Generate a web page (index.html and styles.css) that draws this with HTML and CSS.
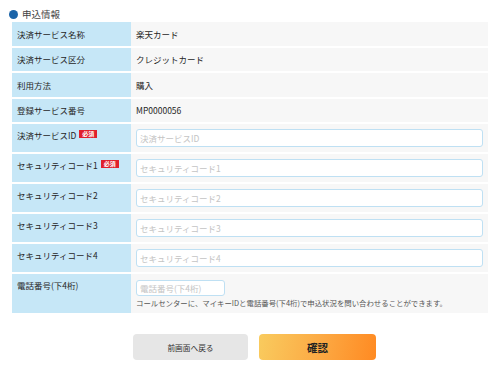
FILE: index.html
```html
<!DOCTYPE html>
<html lang="ja">
<head>
    <meta charset="UTF-8">
    <meta name="viewport" content="width=device-width, initial-scale=1.0">
    <title>申込情報</title>
    <link rel="stylesheet" href="styles.css">
</head>
<body>
    <div class="container">
        <h2 class="section-title"><span class="dot"></span>申込情報</h2>
        <div class="form-table">
            <div class="row">
                <div class="label">決済サービス名称</div>
                <div class="value">楽天カード</div>
            </div>
            <div class="row">
                <div class="label">決済サービス区分</div>
                <div class="value">クレジットカード</div>
            </div>
            <div class="row">
                <div class="label">利用方法</div>
                <div class="value">購入</div>
            </div>
            <div class="row">
                <div class="label">登録サービス番号</div>
                <div class="value">MP0000056</div>
            </div>
            <div class="row input-row">
                <div class="label">決済サービスID<span class="required">必須</span></div>
                <div class="value"><input type="text" placeholder="決済サービスID"></div>
            </div>
            <div class="row input-row">
                <div class="label">セキュリティコード1<span class="required">必須</span></div>
                <div class="value"><input type="text" placeholder="セキュリティコード1"></div>
            </div>
            <div class="row input-row">
                <div class="label">セキュリティコード2</div>
                <div class="value"><input type="text" placeholder="セキュリティコード2"></div>
            </div>
            <div class="row input-row">
                <div class="label">セキュリティコード3</div>
                <div class="value"><input type="text" placeholder="セキュリティコード3"></div>
            </div>
            <div class="row input-row">
                <div class="label">セキュリティコード4</div>
                <div class="value"><input type="text" placeholder="セキュリティコード4"></div>
            </div>
            <div class="row phone-row">
                <div class="label">電話番号(下4桁)</div>
                <div class="value">
                    <input type="text" class="short" placeholder="電話番号(下4桁)">
                    <p class="note">コールセンターに、マイキーIDと電話番号(下4桁)で申込状況を問い合わせることができます。</p>
                </div>
            </div>
        </div>
        <div class="buttons">
            <button class="btn btn-back">前画面へ戻る</button>
            <button class="btn btn-confirm">確認</button>
        </div>
    </div>
</body>
</html>
```

FILE: styles.css
```css
* {
    margin: 0;
    padding: 0;
    box-sizing: border-box;
}

body {
    font-family: "Noto Sans CJK JP", "Noto Sans", sans-serif;
    background: #fff;
    color: #333;
}

.container {
    padding: 7px 12px 0;
}

.section-title {
    display: flex;
    align-items: center;
    font-size: 9.5px;
    font-weight: normal;
    color: #444;
    height: 14px;
    margin-bottom: 1px;
    margin-left: -3px;
}

.dot {
    width: 9px;
    height: 9px;
    border-radius: 50%;
    background: #1b64a8;
    margin-right: 4px;
}

.form-table {
    display: flex;
    flex-direction: column;
    gap: 2px;
}

.row {
    display: grid;
    grid-template-columns: 119px 1fr;
    min-height: 23.5px;
}

.label {
    background: #c6e7f7;
    font-size: 8.5px;
    padding-left: 5px;
    display: flex;
    align-items: center;
    color: #262626;
}

.required {
    display: inline-block;
    background: #e0202c;
    color: #fff;
    font-size: 6px;
    font-weight: bold;
    line-height: 8px;
    height: 8px;
    padding: 0 3px;
    margin-left: 3px;
    margin-top: 1px;
}

.value {
    background: #f7f7f7;
    font-size: 8.5px;
    padding: 0 5px;
    display: flex;
    align-items: center;
    color: #262626;
}

.input-row {
    height: 28px;
}

.input-row .label,
.phone-row .label {
    align-items: flex-start;
    padding-top: 5px;
}

.phone-row {
    height: 39px;
}

.phone-row .value {
    flex-direction: column;
    align-items: flex-start;
    padding-top: 6px;
}

input {
    width: 100%;
    height: 18px;
    border: 1.5px solid #bfe0f3;
    border-radius: 3px;
    background: #fff;
    font-family: inherit;
    font-size: 8.5px;
    padding: 0 3px;
    color: #333;
    outline: none;
}

input::placeholder {
    color: #c4c4c4;
}

input.short {
    width: 89px;
    height: 16px;
}

.note {
    font-size: 7.4px;
    color: #555;
    margin-top: 1px;
    white-space: nowrap;
}

.buttons {
    display: flex;
    justify-content: center;
    gap: 11px;
    margin-top: 21px;
    padding-left: 9px;
}

.btn {
    height: 26px;
    border: none;
    border-radius: 4px;
    font-family: inherit;
    cursor: pointer;
}

.btn-back {
    width: 115px;
    background: #e6e6e6;
    color: #333;
    font-size: 7.7px;
}

.btn-confirm {
    width: 117px;
    background: linear-gradient(100deg, #f9cb5e 0%, #fcab45 50%, #ff8a22 100%);
    color: #222;
    font-size: 10.5px;
    font-weight: bold;
}
```
